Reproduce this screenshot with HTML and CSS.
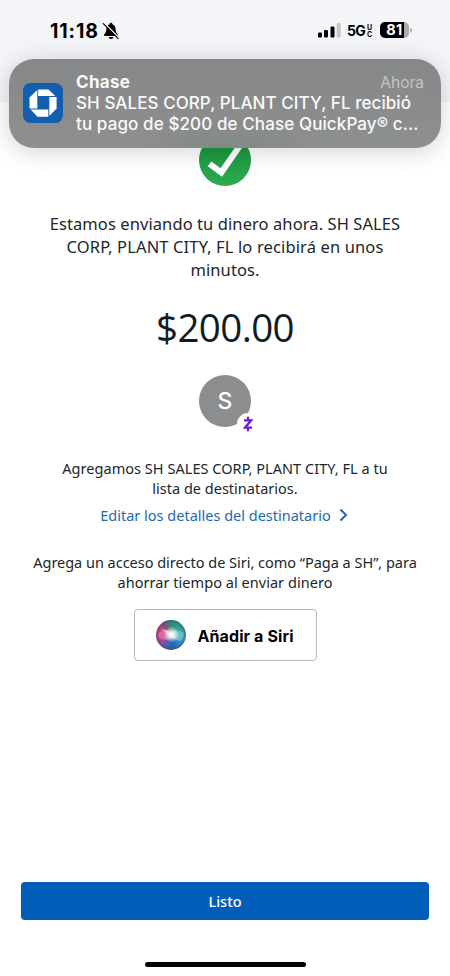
FILE: index.html
```html
<!DOCTYPE html>
<html lang="es">
<head>
<meta charset="utf-8">
<title>Chase</title>
<link rel="stylesheet" href="styles.css">
</head>
<body>
<div class="screen">
  <header class="top">
    <div class="time">11:18</div>
    <svg class="bell" viewBox="0 0 18 18"><path d="M2 13.300c0-1.500 2.100-2 2.300-5.500C4.400 4.700 5.600 3 7.400 2.500 7.600 1.200 8.200.7 9 .7s1.400.5 1.600 1.800c1.800.5 3 2.200 3.100 5.300.2 3.500 2.300 4 2.300 5.500 0 .5-.4.7-.9.7H2.900c-.5 0-.9-.2-.9-.7zM6.500 15h5c-.3 1.200-1.200 1.900-2.500 1.900S6.800 16.200 6.500 15z"/><path d="M2.200 1 17 15.800" stroke="#f4f5f8" stroke-width="1.300"/><path d="M1.300 1.700 16.200 16.600" stroke="#000" stroke-width="1.200" stroke-linecap="round"/></svg>
    <svg class="signal" viewBox="0 0 23 15"><rect y="9.500" width="4" height="5" rx="1.200"/><rect x="6" y="7" width="4" height="7.500" rx="1.200"/><rect x="12.500" y="3.500" width="4" height="11" rx="1.200"/><rect x="18.700" y="0" width="4" height="14.500" rx="1.200" fill="#c6c7c9"/></svg>
    <div class="net">5G</div>
    <div class="uc"><span>U</span><span>C</span></div>
    <div class="battery">81</div>
    <div class="nub"></div>
  </header>

  <main class="content">
    <svg class="check" viewBox="0 0 52 52"><defs><linearGradient id="green" x2="0" y2="1"><stop offset="0" stop-color="#168f3d"/><stop offset="1" stop-color="#2cab50"/></linearGradient></defs><circle cx="26" cy="26" r="26" fill="url(#green)"/><path d="M10.500 29.800 22.300 38.500 41 11.500" fill="none" stroke="#fff" stroke-width="6"/></svg>
    <p class="message"><span class="m1">Estamos enviando tu dinero ahora. SH SALES</span><span class="m2">CORP, PLANT CITY, FL lo recibirá en unos</span><span class="m3">minutos.</span></p>
    <div class="amount">$200.00</div>
    <div class="avatar">S
      <div class="zelle"><svg viewBox="0 0 10 16"><path d="M5 .7v3M5 12.300v3M1 4.300h7.200L2 11.700h7" fill="none" stroke="#6d1ed4" stroke-width="2.300"/></svg></div>
    </div>
    <p class="added"><span class="a1">Agregamos SH SALES CORP, PLANT CITY, FL a tu</span><span class="a2">lista de destinatarios.</span></p>
    <a class="edit"><span>Editar los detalles del destinatario</span><svg viewBox="0 0 9 14"><path d="M1.500 1.500 7 7 1.500 12.500" fill="none" stroke="#1e69ad" stroke-width="2"/></svg></a>
    <p class="siri-text"><span class="s1">Agrega un acceso directo de Siri, como “Paga a SH”, para</span><span class="s2">ahorrar tiempo al enviar dinero</span></p>
    <button class="siri"><svg class="orb" viewBox="0 0 30 30"><defs><radialGradient id="glow"><stop offset="0" stop-color="#fff"/><stop offset=".35" stop-color="#fff" stop-opacity=".8"/><stop offset="1" stop-color="#fff" stop-opacity="0"/></radialGradient><radialGradient id="rim"><stop offset=".75" stop-color="#34446c" stop-opacity="0"/><stop offset="1" stop-color="#34446c" stop-opacity=".5"/></radialGradient></defs><ellipse cx="10" cy="15" rx="8" ry="5" fill="#fff" opacity=".22"/><ellipse cx="21" cy="15" rx="7" ry="4.500" fill="#fff" opacity=".25"/><path d="M5 9Q12 9 17 16T27 19Q20 21 14 16T5 9z" fill="#fff" opacity=".45"/><circle cx="15.500" cy="14.500" r="8" fill="url(#glow)"/><circle cx="15" cy="15" r="15" fill="url(#rim)"/></svg><span class="siri-label">Añadir a Siri</span></button>
  </main>

  <footer class="bottom">
    <button class="done">Listo</button>
    <div class="home"></div>
  </footer>

  <section class="notice">
    <svg class="logo" viewBox="0 0 40 40"><rect width="40" height="40" rx="7.500" fill="#135eaf"/><g fill="#fff"><path d="M15.200 6.500H25.500L32.300 13H15.200z"/><path d="M33.600 14v11.500L26.300 33V14z"/><path d="M25.300 26.500V33.700H14.500L7.500 26.500z"/><path d="M6.500 25.600V14.500L14.300 7v18.600z"/></g></svg>
    <div class="notice-body">
      <div class="notice-head"><strong>Chase</strong><span class="now">Ahora</span></div>
      <div class="line n1">SH SALES CORP, PLANT CITY, FL recibió</div>
      <div class="line n2">tu pago de $200 de Chase QuickPay® c...</div>
    </div>
  </section>
</div>
</body>
</html>
```
FILE: styles.css
```css
* { box-sizing: border-box; }
body { margin: 0; background: #fff; }
p { margin: 0; }
button { padding: 0; border: 0; }
.screen { position: relative; width: 450px; height: 976px; overflow: hidden; display: flex; flex-direction: column; font-family: "Noto Sans", sans-serif; color: #20262b; }
.top { height: 102px; flex: none; background: #f4f5f8; display: flex; align-items: flex-start; padding: 20px 0 0 50px; font-family: Inter, sans-serif; color: #000; }
.time { width: 52px; font-size: 19.500px; line-height: 22px; font-weight: 700; letter-spacing: 0.850px; white-space: nowrap; }
.bell { width: 18px; height: 18px; margin-top: 2px; }
.signal { width: 23px; height: 15px; margin: 3px 0 0 198px; }
.net { margin-left: 6px; width: 20px; font-size: 14px; line-height: 22px; font-weight: 700; letter-spacing: -0.8px; }
.uc { display: flex; flex-direction: column; margin-top: 4px; width: 6px; font-size: 7px; line-height: 7px; font-weight: 700; }
.battery { margin: 2px 0 0 7px; width: 29px; height: 16px; border-radius: 5px; background: linear-gradient(90deg, #000 84%, #aaabad 84%); color: #fff; font-size: 14.500px; line-height: 16px; font-weight: 700; letter-spacing: 0.3px; text-align: center; }
.nub { width: 2px; height: 5px; margin: 8px 0 0 1px; border-radius: 0 3px 3px 0; background: #b3b4b6; }
.content { flex: 1; display: flex; flex-direction: column; align-items: center; }
.content p { display: flex; flex-direction: column; align-items: center; white-space: nowrap; }
.check { width: 52px; height: 52px; margin-top: 32px; flex: none; }
.content .message { margin-top: 27px; font-size: 16.500px; line-height: 22.800px; letter-spacing: 0.085px; }
.m2 { letter-spacing: 0.13px; }
.amount { margin-top: 20px; height: 54px; font-family: "Open Sans", sans-serif; font-size: 38.500px; line-height: 53px; letter-spacing: -0.6px; color: #111b22; }
.avatar { position: relative; margin-top: 20px; width: 52px; height: 52px; flex: none; border-radius: 50%; background: #8c8d8f; color: #fff; font: 500 23px/52px Inter, sans-serif; text-align: center; }
.zelle { position: absolute; left: 38px; top: 38px; width: 22px; height: 22px; border-radius: 50%; background: #fff; display: flex; align-items: center; justify-content: center; }
.zelle svg { width: 10px; height: 16px; }
.content .added { margin-top: 31px; font-size: 14.500px; line-height: 20px; }
.a1 { letter-spacing: 0.04px; }
.edit { margin-top: 7px; height: 20px; display: flex; align-items: center; gap: 8px; padding-right: 2px; font-size: 14.500px; line-height: 20px; color: #1e69ad; white-space: nowrap; }
.edit svg { width: 9px; height: 14px; }
.content .siri-text { margin-top: 27px; font-size: 14.500px; line-height: 20px; letter-spacing: -0.02px; }
.s2 { letter-spacing: 0.04px; }
.siri { margin-top: 17px; width: 183px; height: 52px; flex: none; border: 1px solid #b7b8ba; border-radius: 4px; background: #fff; display: flex; align-items: center; padding-left: 21px; gap: 12px; color: #000; font: 700 16px/20px Inter, sans-serif; letter-spacing: 0.1px; white-space: nowrap; }
.siri-label { padding-top: 1px; }
.orb { width: 30px; height: 30px; flex: none; border-radius: 50%; background: conic-gradient(from 0deg, #29917c, #38a99e 80deg, #3ba5cb 110deg, #2467b1 165deg, #525cae 205deg, #bd4297 245deg, #d3437f 285deg, #8e4770 325deg, #29917c); }
.bottom { height: 94px; flex: none; display: flex; flex-direction: column; align-items: center; }
.done { width: 408px; height: 38px; border-radius: 4px; background: #005eb8; color: #fff; font: 500 14.500px/38px "Noto Sans", sans-serif; }
.home { width: 161px; height: 5px; margin-top: 42px; border-radius: 3px; background: #000; }
.notice { position: absolute; left: 9px; top: 59px; width: 432px; height: 89px; border-radius: 25px; background: radial-gradient(ellipse at 50% 120%, #768b7b 0, #858b88 18%, transparent 32%), linear-gradient(#868789, #8e8f8f); box-shadow: 0 3px 25px #0000002e; color: #fafafa; display: flex; padding: 12px 17px 0 14px; font-family: Inter, sans-serif; }
.logo { width: 40px; height: 40px; margin-top: 12px; flex: none; }
.notice-body { flex: 1; margin-left: 13px; min-width: 0; }
.notice-head { height: 22px; display: flex; justify-content: space-between; font-size: 17px; line-height: 22px; }
.notice-head strong { font-weight: 700; letter-spacing: 0.3px; }
.now { font-size: 15.500px; line-height: 23px; color: #c3c4c4; }
.line { height: 21px; font-size: 17px; line-height: 21px; font-weight: 500; white-space: nowrap; }
.n1 { letter-spacing: 0.070px; }
.n2 { letter-spacing: 0.110px; }
```
